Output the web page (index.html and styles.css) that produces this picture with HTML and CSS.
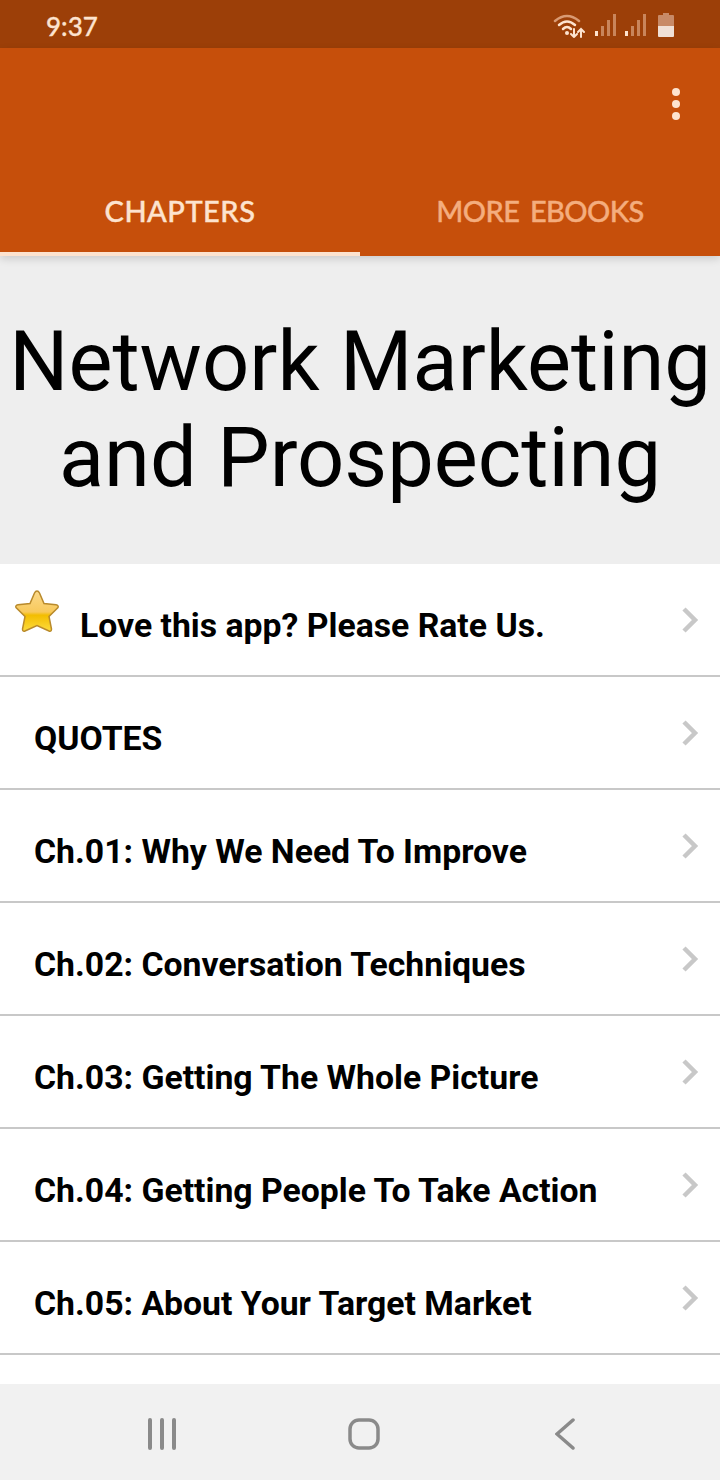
FILE: index.html
```html
<!DOCTYPE html>
<html lang="en">
<head>
  <meta charset="UTF-8" />
  <meta name="viewport" content="width=device-width, initial-scale=1.0"/>
  <title>Network Marketing and Prospecting</title>
  <link rel="stylesheet" href="styles.css">
</head>
<body>
  <div class="phone">
    <div class="status-bar">
      <span class="clock">9:37</span>
      <div class="status-icons">
        <svg class="wifi" width="33" height="26" viewBox="0 0 33 26" fill="none" stroke-linecap="round">
          <path d="M2 9 Q14 -1 26 9" stroke="#d99a73" stroke-width="2.5"/>
          <path d="M6 13 Q14 6 22 13" stroke="#fde3cf" stroke-width="2.5"/>
          <path d="M10 17 Q14 13 18 17" stroke="#fde3cf" stroke-width="2.5"/>
          <circle cx="14" cy="21" r="2" fill="#fde3cf"/>
          <path d="M21 17 V25 M18 22 L21 25 L24 22 M28 25 V17 M25 20 L28 17 L31 20" stroke="#fde3cf" stroke-width="2"/>
        </svg>
        <svg class="signal" width="24" height="24" viewBox="0 0 24 24">
          <rect x="1" y="18" width="3" height="5" fill="#fde3cf"/>
          <rect x="7" y="13" width="3" height="10" fill="#c9855b"/>
          <rect x="13" y="7" width="3" height="16" fill="#c9855b"/>
          <rect x="19" y="1" width="3" height="22" fill="#c9855b"/>
        </svg>
        <svg class="signal" width="24" height="24" viewBox="0 0 24 24">
          <rect x="1" y="18" width="3" height="5" fill="#fde3cf"/>
          <rect x="7" y="13" width="3" height="10" fill="#c9855b"/>
          <rect x="13" y="7" width="3" height="16" fill="#c9855b"/>
          <rect x="19" y="1" width="3" height="22" fill="#c9855b"/>
        </svg>
        <svg class="battery" width="16" height="24" viewBox="0 0 16 24">
          <path d="M5 0 H11 V2 H15 Q16 2 16 3 V13 H0 V3 Q0 2 1 2 H5 Z" fill="#c88a67"/>
          <path d="M0 13 H16 V23 Q16 24 15 24 H1 Q0 24 0 23 Z" fill="#f0e0d6"/>
        </svg>
      </div>
    </div>

    <header class="app-bar">
      <div class="toolbar">
        <div class="menu-dots"><span></span><span></span><span></span></div>
      </div>
      <nav class="tabs">
        <div class="tab active">CHAPTERS</div>
        <div class="tab more">MORE EBOOKS</div>
      </nav>
    </header>

    <section class="book-title">
      <h1>Network Marketing and Prospecting</h1>
    </section>

    <ul class="chapters">
      <li class="rate-row">
        <svg class="star" width="46" height="46" viewBox="0 0 46 46">
          <defs>
            <linearGradient id="starFill" x1="0" y1="0" x2="0" y2="1">
              <stop offset="0" stop-color="#fbd98a"/>
              <stop offset="0.52" stop-color="#f8c95c"/>
              <stop offset="0.6" stop-color="#f3bd00"/>
              <stop offset="1" stop-color="#fddc3f"/>
            </linearGradient>
          </defs>
          <path d="M23 2 Q24.500 2 25.500 4 L30 14.500 L42 15.800 Q45 16.500 44 18.500 L35 27.500 L37.500 40 Q37.500 43 35 42 L23 36.500 L11 42 Q8.500 43 8.500 40 L11 27.500 L2 18.500 Q1 16.500 4 15.800 L16 14.500 L20.500 4 Q21.500 2 23 2 Z" fill="url(#starFill)" stroke="#b98a2c" stroke-width="1.500"/>
        </svg>
        <span class="row-text">Love this app? Please Rate Us.</span>
        <svg class="chevron" width="18" height="28" viewBox="0 0 18 28"><path d="M3 3 L14 14 L3 25" fill="none" stroke="#c8c8c8" stroke-width="4.500"/></svg>
      </li>
      <li>
        <span class="row-text">QUOTES</span>
        <svg class="chevron" width="18" height="28" viewBox="0 0 18 28"><path d="M3 3 L14 14 L3 25" fill="none" stroke="#c8c8c8" stroke-width="4.500"/></svg>
      </li>
      <li>
        <span class="row-text">Ch.01: Why We Need To Improve</span>
        <svg class="chevron" width="18" height="28" viewBox="0 0 18 28"><path d="M3 3 L14 14 L3 25" fill="none" stroke="#c8c8c8" stroke-width="4.500"/></svg>
      </li>
      <li>
        <span class="row-text">Ch.02: Conversation Techniques</span>
        <svg class="chevron" width="18" height="28" viewBox="0 0 18 28"><path d="M3 3 L14 14 L3 25" fill="none" stroke="#c8c8c8" stroke-width="4.500"/></svg>
      </li>
      <li>
        <span class="row-text">Ch.03: Getting The Whole Picture</span>
        <svg class="chevron" width="18" height="28" viewBox="0 0 18 28"><path d="M3 3 L14 14 L3 25" fill="none" stroke="#c8c8c8" stroke-width="4.500"/></svg>
      </li>
      <li>
        <span class="row-text">Ch.04: Getting People To Take Action</span>
        <svg class="chevron" width="18" height="28" viewBox="0 0 18 28"><path d="M3 3 L14 14 L3 25" fill="none" stroke="#c8c8c8" stroke-width="4.500"/></svg>
      </li>
      <li>
        <span class="row-text">Ch.05: About Your Target Market</span>
        <svg class="chevron" width="18" height="28" viewBox="0 0 18 28"><path d="M3 3 L14 14 L3 25" fill="none" stroke="#c8c8c8" stroke-width="4.500"/></svg>
      </li>
    </ul>

    <footer class="nav-bar">
      <svg class="nav-recent" width="32" height="32" viewBox="0 0 32 32"><path d="M4 2 V30 M16 2 V30 M28 2 V30" fill="none" stroke="#8a8a8a" stroke-width="4" stroke-linecap="round"/></svg>
      <svg class="nav-home" width="32" height="32" viewBox="0 0 32 32"><rect x="2" y="2" width="28" height="28" rx="9" fill="none" stroke="#8a8a8a" stroke-width="3.500"/></svg>
      <svg class="nav-back" width="22" height="32" viewBox="0 0 22 32"><path d="M18 2 L2 16 L18 30" fill="none" stroke="#8a8a8a" stroke-width="3.500" stroke-linecap="round"/></svg>
    </footer>
  </div>
</body>
</html>
```

FILE: styles.css
```css
* {
  box-sizing: border-box;
}

body {
  margin: 0;
  background: #fff;
  font-family: Roboto, sans-serif;
}

.phone {
  width: 720px;
  height: 1480px;
  display: flex;
  flex-direction: column;
  overflow: hidden;
}

.status-bar {
  height: 48px;
  flex-shrink: 0;
  background: #9c3f08;
  display: flex;
  align-items: center;
  justify-content: space-between;
  padding: 4px 46px 0 46px;
}

.clock {
  color: #fde3cf;
  font-family: Lato, sans-serif;
  font-size: 26px;
  font-weight: 500;
  -webkit-text-stroke: 0.3px #fde3cf;
}

.status-icons {
  display: flex;
  align-items: center;
  gap: 6px;
  margin-top: -2px;
}

.wifi {
  margin-right: 2px;
}

.battery {
  margin-left: 4px;
}

.app-bar {
  height: 208px;
  flex-shrink: 0;
  background: #c64f0b;
  display: flex;
  flex-direction: column;
  justify-content: space-between;
  position: relative;
  z-index: 1;
  box-shadow: 0 3px 8px rgba(0, 0, 0, 0.14);
}

.toolbar {
  display: flex;
  justify-content: flex-end;
  padding: 40px 40px 0 0;
}

.menu-dots {
  display: flex;
  flex-direction: column;
  gap: 4px;
}

.menu-dots span {
  width: 8px;
  height: 8px;
  border-radius: 50%;
  background: #fde3cf;
}

.tabs {
  display: flex;
  height: 96px;
}

.tab {
  flex: 1;
  display: flex;
  align-items: center;
  justify-content: center;
  padding-top: 9px;
  color: #f4ad7e;
  font-family: Lato, sans-serif;
  font-size: 29px;
  font-weight: 500;
  letter-spacing: 0.5px;
  -webkit-text-stroke: 0.4px currentColor;
  border-bottom: 4px solid transparent;
}

.tab.active {
  color: #fde3cf;
  border-bottom-color: #fde3cf;
}

.tab.more {
  letter-spacing: -0.6px;
  word-spacing: 4px;
}

.book-title {
  height: 308px;
  flex-shrink: 0;
  background: #eeeeee;
  display: flex;
  align-items: center;
  justify-content: center;
}

.book-title h1 {
  margin: 0;
  width: 720px;
  color: #000;
  font-size: 83px;
  font-weight: 400;
  line-height: 96px;
  text-align: center;
}

.chapters {
  flex: 1;
  margin: 0;
  padding: 0;
  list-style: none;
  overflow: hidden;
  background: #fff;
}

.chapters li {
  height: 113px;
  display: flex;
  align-items: center;
  padding: 0 21px 0 34px;
  border-bottom: 2px solid #c8c8c8;
}

.row-text {
  flex: 1;
  padding-top: 12px;
  color: #000;
  font-size: 33.75px;
  font-weight: 700;
}

.rate-row {
  padding-left: 14px !important;
}

.rate-row .star {
  margin-right: 20px;
  margin-top: -16px;
}

.nav-bar {
  height: 96px;
  flex-shrink: 0;
  background: #f1f1f1;
  display: flex;
  align-items: center;
  padding: 4px 0 0 146px;
}

.nav-home {
  margin-left: 170px;
}

.nav-back {
  margin-left: 175px;
}
```
